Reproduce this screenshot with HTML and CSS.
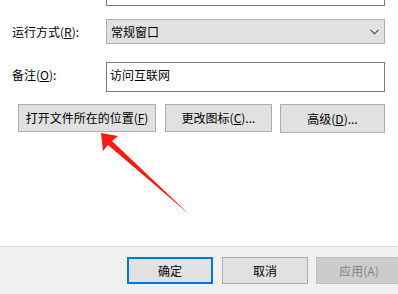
FILE: index.html
```html
<!DOCTYPE html>
<html lang="zh-CN">
<head>
<meta charset="utf-8">
<link rel="stylesheet" href="styles.css">
</head>
<body>
<div class="dialog">
  <div class="main">
    <div class="row row-top">
      <span class="label"></span>
      <div class="field top-field"></div>
    </div>
    <div class="row row-combo">
      <span class="label">运行方式(<u>R</u>):</span>
      <div class="combo">
        <span>常规窗口</span>
        <svg class="chev" width="9" height="6" viewBox="0 0 9 6"><path d="M0.5 0.8 L4.5 4.8 L8.5 0.8" fill="none" stroke="#444" stroke-width="1.1"/></svg>
      </div>
    </div>
    <div class="row row-notes">
      <span class="label label-notes">备注(<u>O</u>):</span>
      <div class="field notes">访问互联网</div>
    </div>
    <div class="btn-row">
      <button class="btn b1">打开文件所在的位置(<u>F</u>)</button>
      <button class="btn b2">更改图标(<u>C</u>)...</button>
      <button class="btn b3">高级(<u>D</u>)...</button>
    </div>
  </div>
  <div class="footer">
    <button class="btn fbtn ok">确定</button>
    <button class="btn fbtn">取消</button>
    <button class="btn fbtn disabled">应用(A)</button>
  </div>
  <svg class="arrow" width="398" height="294" viewBox="0 0 398 294">
    <polygon points="101,133 118,136 112,141 190,215 108,145 103,151" fill="#fb1b12"/>
  </svg>
</div>
</body>
</html>
```
FILE: styles.css
```css
html, body {
  margin: 0;
  padding: 0;
  background: #ffffff;
}
body {
  font-family: "Noto Sans CJK SC", "Microsoft YaHei", sans-serif;
  font-size: 12px;
  color: #000;
  width: 398px;
  height: 294px;
  overflow: hidden;
}
.dialog {
  position: relative;
  width: 398px;
  height: 294px;
  display: flex;
  flex-direction: column;
}
.main {
  height: 246px;
  box-sizing: border-box;
  padding-left: 12px;
  display: flex;
  flex-direction: column;
}
.row {
  display: flex;
  align-items: flex-start;
}
.label {
  width: 94px;
  flex: none;
  line-height: 14px;
}
.field {
  width: 279px;
  box-sizing: border-box;
  border: 1px solid #7a7a7a;
  background: #fff;
}
.row-top {
  margin-top: -17px;
}
.top-field {
  height: 23px;
}
.row-combo {
  margin-top: 13px;
  align-items: center;
}
.row-combo .label {
  padding-top: 1px;
}
.combo {
  width: 279px;
  height: 25px;
  box-sizing: border-box;
  border: 1px solid #adadad;
  background: #e1e1e1;
  display: flex;
  align-items: center;
  justify-content: space-between;
  padding: 0 5px 0 4px;
  line-height: 14px;
}
.chev {
  display: block;
}
.row-notes {
  margin-top: 18px;
}
.label-notes {
  padding-top: 6px;
}
.notes {
  height: 30px;
  padding: 5px 0 0 3px;
  line-height: 14px;
}
.btn {
  font-family: inherit;
  font-size: 12px;
  color: #000;
  background: #e1e1e1;
  border: 1px solid #adadad;
  box-sizing: border-box;
  margin: 0;
  padding: 0;
  line-height: 14px;
}
.btn-row {
  display: flex;
  margin-top: 12px;
  padding-left: 6px;
}
.btn-row .btn {
  height: 28px;
}
.b1 { width: 138px; }
.b2 { width: 107px; margin-left: 9px; }
.b3 { width: 105px; margin-left: 8px; height: 29px !important; }
.footer {
  flex: 1;
  background: #f0f0f0;
  border-top: 1px solid #dfdfdf;
  display: flex;
  align-items: flex-start;
  padding: 10px 0 0 127px;
  gap: 9px;
}
.fbtn {
  width: 86px;
  height: 27px;
  flex: none;
}
.ok {
  border: 2px solid #0078d7;
}
.disabled {
  background: #cccccc;
  border-color: #bfbfbf;
  color: #838383;
  margin-left: -1px;
}
.arrow {
  position: absolute;
  left: 0;
  top: 0;
  pointer-events: none;
}
```
